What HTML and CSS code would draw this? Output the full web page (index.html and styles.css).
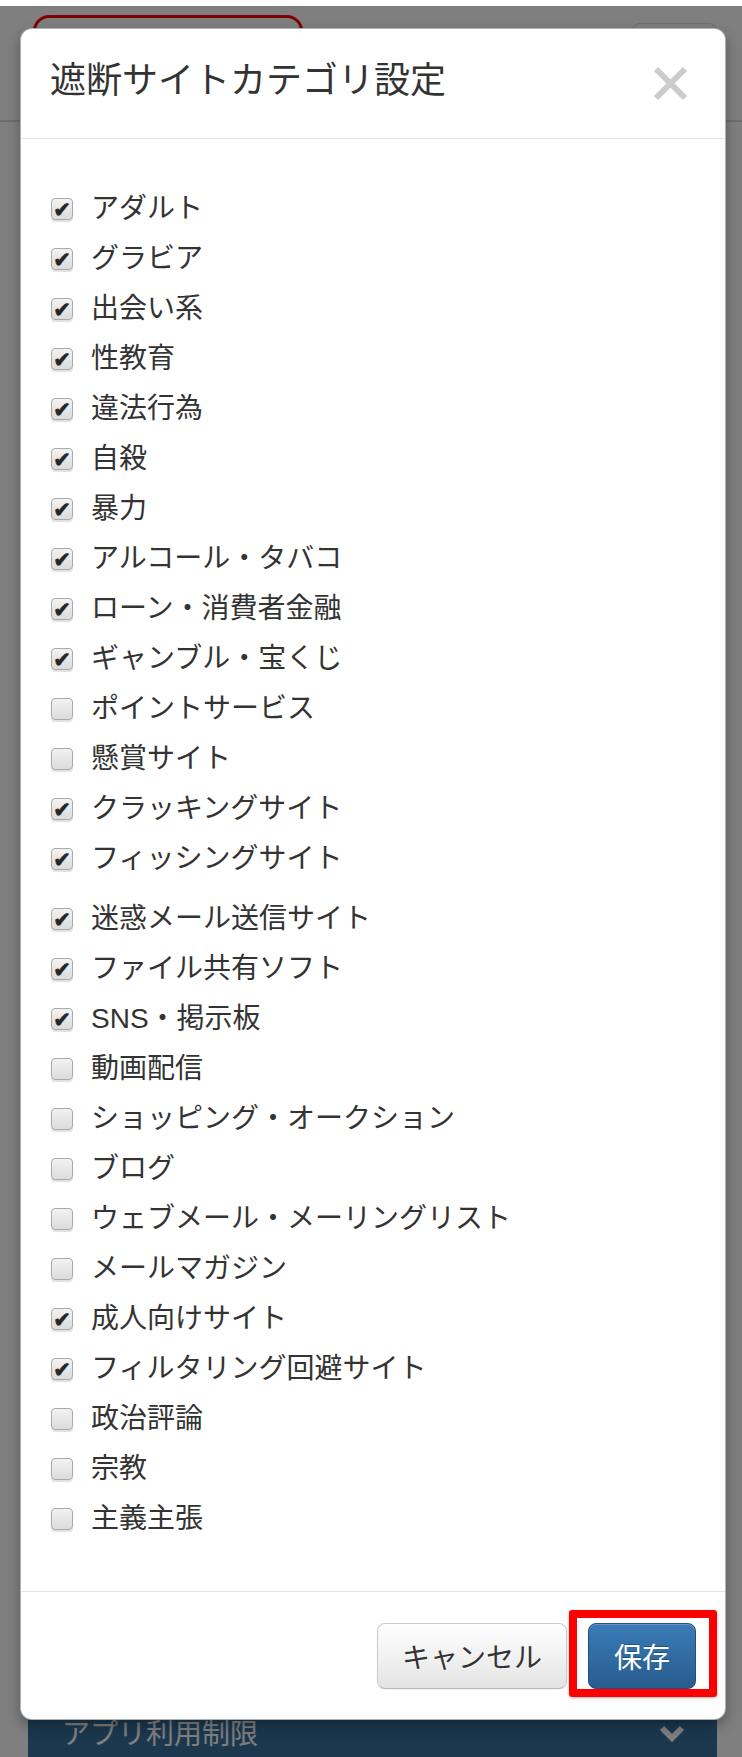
FILE: index.html
```html
<!DOCTYPE html>
<html lang="ja">
<head>
    <meta charset="UTF-8">
    <meta name="viewport" content="width=device-width, initial-scale=1.0">
    <title>遮断サイトカテゴリ設定</title>
    <link rel="stylesheet" href="styles.css">
</head>
<body>
    <div class="page">
        <header class="site-header">
            <div class="logo-frame"></div>
            <div class="menu-btn"></div>
        </header>
        <div class="content"></div>
        <div class="section-bar">
            <span>アプリ利用制限</span>
            <svg class="chevron" width="26" height="18" viewBox="0 0 26 18"><polyline points="3,3 13,13 23,3" fill="none" stroke="#fff" stroke-width="6"/></svg>
        </div>
    </div>

    <div class="backdrop"></div>

    <div class="modal">
        <div class="modal-header">
            <h3>遮断サイトカテゴリ設定</h3>
            <button class="close" aria-label="close">
                <svg width="35" height="35" viewBox="0 0 35 35"><path d="M3 3 L32 32 M32 3 L3 32" stroke="#cccccc" stroke-width="6"/></svg>
            </button>
        </div>

        <div class="modal-body">
            <div class="group">
                <label class="item"><span class="box on"></span>アダルト</label>
                <label class="item"><span class="box on"></span>グラビア</label>
                <label class="item"><span class="box on"></span>出会い系</label>
                <label class="item"><span class="box on"></span>性教育</label>
                <label class="item"><span class="box on"></span>違法行為</label>
                <label class="item"><span class="box on"></span>自殺</label>
                <label class="item"><span class="box on"></span>暴力</label>
                <label class="item"><span class="box on"></span>アルコール・タバコ</label>
                <label class="item"><span class="box on"></span>ローン・消費者金融</label>
                <label class="item"><span class="box on"></span>ギャンブル・宝くじ</label>
                <label class="item"><span class="box"></span>ポイントサービス</label>
                <label class="item"><span class="box"></span>懸賞サイト</label>
                <label class="item"><span class="box on"></span>クラッキングサイト</label>
                <label class="item"><span class="box on"></span>フィッシングサイト</label>
            </div>
            <div class="group">
                <label class="item"><span class="box on"></span>迷惑メール送信サイト</label>
                <label class="item"><span class="box on"></span>ファイル共有ソフト</label>
                <label class="item"><span class="box on"></span>SNS・掲示板</label>
                <label class="item"><span class="box"></span>動画配信</label>
                <label class="item"><span class="box"></span>ショッピング・オークション</label>
                <label class="item"><span class="box"></span>ブログ</label>
                <label class="item"><span class="box"></span>ウェブメール・メーリングリスト</label>
                <label class="item"><span class="box"></span>メールマガジン</label>
                <label class="item"><span class="box on"></span>成人向けサイト</label>
                <label class="item"><span class="box on"></span>フィルタリング回避サイト</label>
                <label class="item"><span class="box"></span>政治評論</label>
                <label class="item"><span class="box"></span>宗教</label>
                <label class="item"><span class="box"></span>主義主張</label>
            </div>
        </div>

        <div class="modal-footer">
            <button class="btn">キャンセル</button>
            <div class="highlight">
                <button class="btn btn-primary">保存</button>
            </div>
        </div>
    </div>
</body>
</html>
```

FILE: styles.css
```css
body {
    margin: 0;
    background: #fff;
    font-family: 'Liberation Sans', 'Noto Sans CJK JP', sans-serif;
    color: #333;
}
.page {
    position: relative;
}
.site-header {
    height: 105px;
    border-bottom: 2px solid #dcdcdc;
    display: flex;
    justify-content: space-between;
    align-items: flex-start;
    padding: 15px 25px 0 33px;
}
.logo-frame {
    width: 264px;
    height: 70px;
    border: 3px solid #ff0000;
    border-radius: 16px;
}
.menu-btn {
    width: 83px;
    height: 56px;
    margin-top: 8px;
    border: 1px solid #d8d8d8;
    border-radius: 8px;
}
.content {
    height: 1583px;
}
.section-bar {
    margin: 0 25px 0 28px;
    height: 90px;
    background: #36709f;
    color: #fff;
    font-size: 28px;
    line-height: 40px;
    display: flex;
    justify-content: space-between;
    align-items: flex-start;
    padding: 10px 32px 0 34px;
    box-sizing: border-box;
}
.chevron {
    margin-top: 10px;
}
.backdrop {
    position: absolute;
    top: 6px;
    left: 0;
    right: 0;
    bottom: 0;
    background: rgba(0, 0, 0, 0.5);
}
.modal {
    position: absolute;
    top: 28px;
    left: 20px;
    width: 706px;
    box-sizing: border-box;
    background: #fff;
    border: 1px solid rgba(0, 0, 0, 0.3);
    border-radius: 12px;
    box-shadow: 0 6px 14px rgba(0, 0, 0, 0.3);
}
.modal-header {
    height: 109px;
    border-bottom: 1px solid #e5e5e5;
    display: flex;
    align-items: center;
    justify-content: space-between;
    padding: 0 37px 0 29px;
}
.modal-header h3 {
    margin: 0;
    font-size: 36px;
    font-weight: normal;
    line-height: 40px;
    color: #333;
    position: relative;
    top: -3px;
}
.close {
    background: none;
    border: none;
    padding: 0;
    width: 35px;
    height: 35px;
    cursor: pointer;
}
.close svg {
    display: block;
}
.modal-body {
    padding: 45px 30px 47px 30px;
}
.group + .group {
    margin-top: 10px;
}
.item {
    display: flex;
    align-items: center;
    height: 50px;
    font-size: 28px;
    line-height: 50px;
    color: #333;
}
.box {
    width: 20px;
    height: 20px;
    margin-right: 18px;
    border: 1px solid #a9a9a9;
    border-radius: 4px;
    background: linear-gradient(#f2f2f2, #dcdcdc);
    box-shadow: 0 2px 1px rgba(0, 0, 0, 0.12);
    display: flex;
    align-items: center;
    justify-content: center;
    flex-shrink: 0;
    overflow: visible;
}
.box.on::after {
    content: "\2714";
    font-family: 'DejaVu Sans', sans-serif;
    font-size: 21px;
    line-height: 20px;
    color: #262626;
    -webkit-text-stroke: 0.8px #262626;
    position: relative;
    top: 1px;
}
.modal-footer {
    height: 127px;
    border-top: 1px solid #e5e5e5;
    display: flex;
    align-items: center;
    justify-content: flex-end;
    padding: 0 29px;
    gap: 21px;
}
.btn {
    height: 66px;
    padding: 0 24px;
    font-family: inherit;
    font-size: 28px;
    color: #333;
    background: linear-gradient(#ffffff, #e4e4e4);
    border: 1px solid #cccccc;
    border-bottom-color: #b8b8b8;
    border-radius: 8px;
    text-shadow: 0 1px 1px rgba(255, 255, 255, 0.75);
    box-shadow: inset 0 1px 0 rgba(255, 255, 255, 0.2), 0 1px 2px rgba(0, 0, 0, 0.05);
    cursor: pointer;
}
.btn-primary {
    width: 108px;
    color: #fff;
    background: linear-gradient(#3a7cb8, #285c8e);
    border-color: #234f7a;
    text-shadow: 0 -1px 0 rgba(0, 0, 0, 0.25);
}
.highlight {
    position: relative;
    display: flex;
}
.highlight::before {
    content: "";
    position: absolute;
    left: -19px;
    right: -21px;
    top: -13px;
    bottom: -8px;
    border: 8px solid #ff0000;
    border-radius: 3px;
    box-shadow: 0 1px 3px rgba(0, 0, 0, 0.3);
    pointer-events: none;
}
```
